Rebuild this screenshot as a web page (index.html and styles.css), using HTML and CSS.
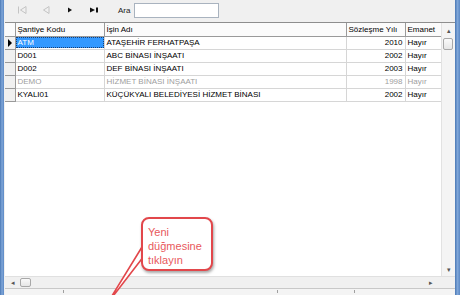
FILE: index.html
```html
<!DOCTYPE html>
<html lang="tr">
<head>
  <meta charset="UTF-8">
  <title>Şantiyeler</title>
<link rel="stylesheet" href="styles.css">
</head>
<body>
  <div class="window">
    <div class="edge edge-left"></div>
    <div class="main">
      <!-- gezinme çubuğu -->
      <div class="toolbar">
        <span class="nav"><svg width="10" height="10" viewBox="0 0 10 10"><path d="M1.5 1.5v7M9 1.5v7L3.5 5z" fill="none" stroke="#c4c4c4"/></svg></span>
        <span class="nav"><svg width="10" height="10" viewBox="0 0 10 10"><path d="M8 1.5v7L2.5 5z" fill="none" stroke="#c4c4c4"/></svg></span>
        <span class="nav"><svg width="10" height="10" viewBox="0 0 10 10"><path d="M3 2.5v5L7 5z" fill="#111"/></svg></span>
        <span class="nav"><svg width="10" height="10" viewBox="0 0 10 10"><path d="M1 2.5v5L6 5z" fill="#111"/><rect x="7" y="2.5" width="2" height="5" fill="#111"/></svg></span>
        <label class="ara">Ara</label>
        <input class="search" type="text">
      </div>

      <div class="gridarea">
        <div class="grid">
          <table>
            <colgroup>
              <col class="c0"><col class="c1"><col class="c2"><col class="c3"><col class="c4">
            </colgroup>
            <tr>
              <th></th><th>Şantiye Kodu</th><th>İşin Adı</th><th>Sözleşme Yılı</th><th>Emanet</th>
            </tr>
            <tr>
              <td class="ind"><svg width="6" height="8" viewBox="0 0 6 8"><path d="M1 0v8l4-4z" fill="#000"/></svg></td>
              <td class="sel"><span>ATM</span></td><td>ATAŞEHİR FERHATPAŞA</td><td class="num">2010</td><td>Hayır</td>
            </tr>
            <tr>
              <td class="ind"></td><td>D001</td><td>ABC BİNASI İNŞAATI</td><td class="num">2002</td><td>Hayır</td>
            </tr>
            <tr>
              <td class="ind"></td><td>D002</td><td>DEF BİNASI İNŞAATI</td><td class="num">2003</td><td>Hayır</td>
            </tr>
            <tr class="pasif">
              <td class="ind"></td><td>DEMO</td><td>HİZMET BİNASI İNŞAATI</td><td class="num">1998</td><td>Hayır</td>
            </tr>
            <tr>
              <td class="ind"></td><td>KYALI01</td><td>KÜÇÜKYALI BELEDİYESİ HİZMET BİNASI</td><td class="num">2002</td><td>Hayır</td>
            </tr>
          </table>
        </div>
        <div class="vscroll">
          <span class="arr">&#9652;</span>
          <span class="thumb"></span>
          <span class="track"></span>
          <span class="arr">&#9662;</span>
        </div>
      </div>

      <div class="hscroll">
        <span class="arr">&#9666;</span>
        <span class="hthumb"></span>
        <span class="track"></span>
        <span class="arr">&#9656;</span>
        <span class="corner"></span>
      </div>

      <div class="statusbar">
        <span class="tick t1"></span>
        <span class="tick t2"></span>
        <span class="tick t3"></span>
        <span class="tick t4"></span>
      </div>
    </div>
    <div class="edge edge-right"></div>

    <!-- açıklama balonu -->
    <svg class="tail" width="60" height="60" viewBox="0 0 60 60">
      <path d="M37 1 L2 58 L39 10" fill="#fff" stroke="#e2474b" stroke-width="1.6" stroke-linejoin="round"/>
    </svg>
    <div class="callout">Yeni<br>düğmesine<br>tıklayın</div>
  </div>
</body>
</html>
```

FILE: styles.css
```css
*{margin: 0;padding: 0;box-sizing: border-box;}
body{
  width: 460px;
  height: 295px;
  overflow: hidden;
  font-family: "Liberation Sans", Arial, sans-serif;
  font-size: 8px;
  color: #000;
  background: #f0f0f0;
}
.window{
  position: relative;
  display: flex;
  width: 460px;
  height: 295px;
}
.edge{
  background: linear-gradient(to right, #4a78b5, #7fa6d8 50%, #5b88c4);
}
.edge-left{width: 4px;}
.edge-right{width: 5px;}
.main{
  flex: 1;
  display: flex;
  flex-direction: column;
  padding-left: 1px;
  background: #f0f0f0;
}

/* toolbar */
.toolbar{
  height: 22px;
  display: flex;
  align-items: center;
  gap: 14px;
  padding: 0 0 2px 12px;
}
.nav{
  width: 10px;
  height: 10px;
  display: flex;
}
.ara{
  margin-left: 5px;
  font-size: 8px;
  color: #222;
}
.search{
  width: 85px;
  height: 15px;
  margin-left: -10px;
  border: 1px solid #a9b3bf;
  background: #fff;
  outline: none;
}

/* grid */
.gridarea{
  flex: 1;
  display: flex;
  border-top: 1px solid #8e8e8e;
}
.grid{
  width: 436px;
  background: #fff;
  overflow: hidden;
}
table{
  width: 436px;
  table-layout: fixed;
  border-collapse: collapse;
}
.c0{width: 10px;}
.c1{width: 89px;}
.c2{width: 242px;}
.c3{width: 59px;}
.c4{width: 36px;}
th{
  height: 13px;
  font-weight: normal;
  text-align: left;
  padding: 0 0 0 2px;
  background: #fbfbfb;
  border-right: 1px solid #9a9a9a;
  border-bottom: 1px solid #9a9a9a;
  white-space: nowrap;
  overflow: hidden;
}
td{
  height: 13px;
  padding: 0 0 0 2px;
  border-right: 1px solid #d6d6d6;
  border-bottom: 1px solid #d6d6d6;
  white-space: nowrap;
  overflow: hidden;
}
td.ind{
  padding: 0;
  background: #f0f0f0;
  border-right: 1px solid #9a9a9a;
  border-bottom: 1px solid #9a9a9a;
  text-align: center;
  line-height: 0;
}
td.num{
  text-align: right;
  padding: 0 2px 0 0;
}
td.sel{
  padding: 0;
}
td.sel span{
  display: block;
  height: 11px;
  line-height: 10px;
  padding-left: 1px;
  background: #3399ff;
  color: #fff;
  border: 1px dotted #1a3f73;
}
tr.pasif td{
  color: #a0a0a0;
}

/* scroll bars */
.vscroll{
  width: 14px;
  display: flex;
  flex-direction: column;
  align-items: center;
  background: #f4f4f4;
  border-left: 1px solid #e2e2e2;
}
.vscroll .arr{
  height: 14px;
  line-height: 16px;
  font-size: 7px;
  color: #555;
}
.thumb{
  width: 10px;
  height: 12px;
  margin: 1px 2px 0 0;
  background: linear-gradient(#fafafa, #e6e6e6);
  border: 1px solid #a8a8a8;
  border-radius: 2px;
}
.track{flex: 1;}
.hscroll{
  height: 12px;
  display: flex;
  align-items: center;
  padding-left: 6px;
  background: #f0f0f0;
  border-top: 1px solid #e0e0e0;
}
.hscroll .arr{
  font-size: 7px;
  color: #555;
  width: 8px;
}
.hthumb{
  width: 11px;
  height: 9px;
  margin-left: 1px;
  background: linear-gradient(#fafafa, #e6e6e6);
  border: 1px solid #a8a8a8;
  border-radius: 2px;
}
.corner{
  width: 14px;
  height: 12px;
  margin-left: 4px;
  background: #f0f0f0;
}
.statusbar{
  height: 7px;
  border-top: 1px solid #c8c8c8;
  background: #f4f4f4;
  display: flex;
}
.tick{
  width: 1px;
  height: 3px;
  margin-top: 1px;
  background: #a0a0a0;
}
.t1{margin-left: 58px;}
.t2{margin-left: 51px;}
.t3{margin-left: 161px;}
.t4{margin-left: 76px;}

/* açıklama balonu */
.callout{
  position: absolute;
  left: 141px;
  top: 217px;
  width: 72px;
  height: 54px;
  padding: 6px 0 0 5px;
  background: #fff;
  border: 2px solid #e2474b;
  border-radius: 8px;
  box-shadow: 1px 2px 3px rgba(0, 0, 0, 0.35);
  color: #e8585c;
  font-family: "Liberation Sans", Arial, sans-serif;
  font-size: 11px;
  line-height: 14px;
}
.tail{
  position: absolute;
  left: 105px;
  top: 246px;
  overflow: visible;
}
```
